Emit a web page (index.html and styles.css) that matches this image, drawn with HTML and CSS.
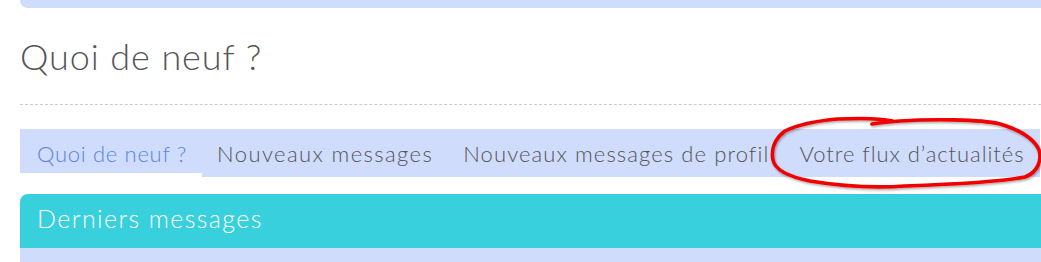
FILE: index.html
```html
<!DOCTYPE html>
<html lang="fr">
<head>
<meta charset="utf-8">
<title>Quoi de neuf ?</title>
<link rel="stylesheet" href="styles.css">
</head>
<body>
<div class="page">
  <div class="top-bar"></div>
  <h1 class="page-title">Quoi de neuf ?</h1>
  <ul class="tabs">
    <li class="tab tab-active">Quoi de neuf ?</li>
    <li class="tab tab-new">Nouveaux messages</li>
    <li class="tab tab-profile">Nouveaux messages de profil</li>
    <li class="tab tab-feed">Votre flux d’actualités</li>
  </ul>
  <div class="block">
    <div class="block-header">Derniers messages</div>
    <div class="block-body"></div>
  </div>
</div>
<svg class="annotation" width="1041" height="262" viewBox="0 0 1041 262" aria-hidden="true">
  <defs>
    <filter id="sh" x="-10%" y="-20%" width="120%" height="140%">
      <feDropShadow dx="1" dy="1.5" stdDeviation="1" flood-color="#000" flood-opacity="0.35"/>
    </filter>
  </defs>
  <path filter="url(#sh)" d="M892 121 C 880 118, 860 118, 838 119 C 815 121, 795 126, 785 131 C 774 139, 771 150, 773 160 C 775 170, 790 177, 810 181 C 840 186, 875 188, 905 186 C 960 184, 1005 181, 1025 177 C 1038 172, 1042 160, 1039 150 C 1034 139, 1020 130, 1000 124 C 980 119, 930 119, 900 121 C 888 122, 878 123, 872 124" fill="none" stroke="#f20000" stroke-width="3.6" stroke-linecap="round" stroke-linejoin="round"/>
</svg>
</body>
</html>
```
FILE: styles.css
```css
html, body {
  margin: 0;
  padding: 0;
  background: #ffffff;
}
body {
  font-family: "Lato", "Liberation Sans", sans-serif;
  color: #555555;
  width: 1041px;
  height: 262px;
  overflow: hidden;
  position: relative;
}
.page {
  margin-left: 20px;
}
.top-bar {
  height: 8px;
  background: #cfdcfc;
  border-bottom-left-radius: 8px;
}
.page-title {
  margin: 0;
  padding: 26px 0 26px 0;
  font-size: 36px;
  line-height: 44px;
  font-weight: 300;
  letter-spacing: 0.9px;
  color: #555555;
  border-bottom: 1px dashed #cccccc;
}
.tabs {
  list-style: none;
  margin: 24px 0 0 0;
  padding: 0;
  display: flex;
  align-items: flex-start;
  overflow: hidden;
}
.tab {
  flex: none;
  height: 48px;
  line-height: 50px;
  padding: 0 15px;
  font-size: 22px;
  font-weight: 300;
  letter-spacing: 1.1px;
  background: #cfdcfc;
  color: #555555;
  white-space: nowrap;
}
.tab-active {
  height: 44px;
  padding: 0 15px 0 17px;
  letter-spacing: 0.7px;
  color: #5b84e0;
}
.tab-new {
  letter-spacing: 1.4px;
}
.tab-profile {
  letter-spacing: 1.1px;
}
.tab-feed {
  letter-spacing: 0.95px;
}
.block {
  margin-top: 17px;
}
.block-header {
  height: 54px;
  line-height: 49px;
  padding-left: 17px;
  background: #38d0dc;
  color: #ffffff;
  font-size: 25px;
  font-weight: 300;
  letter-spacing: 1.4px;
  border-top-left-radius: 8px;
}
.block-body {
  height: 20px;
  background: #cfdcfc;
}
.annotation {
  position: absolute;
  left: 0;
  top: 0;
  pointer-events: none;
}
```
